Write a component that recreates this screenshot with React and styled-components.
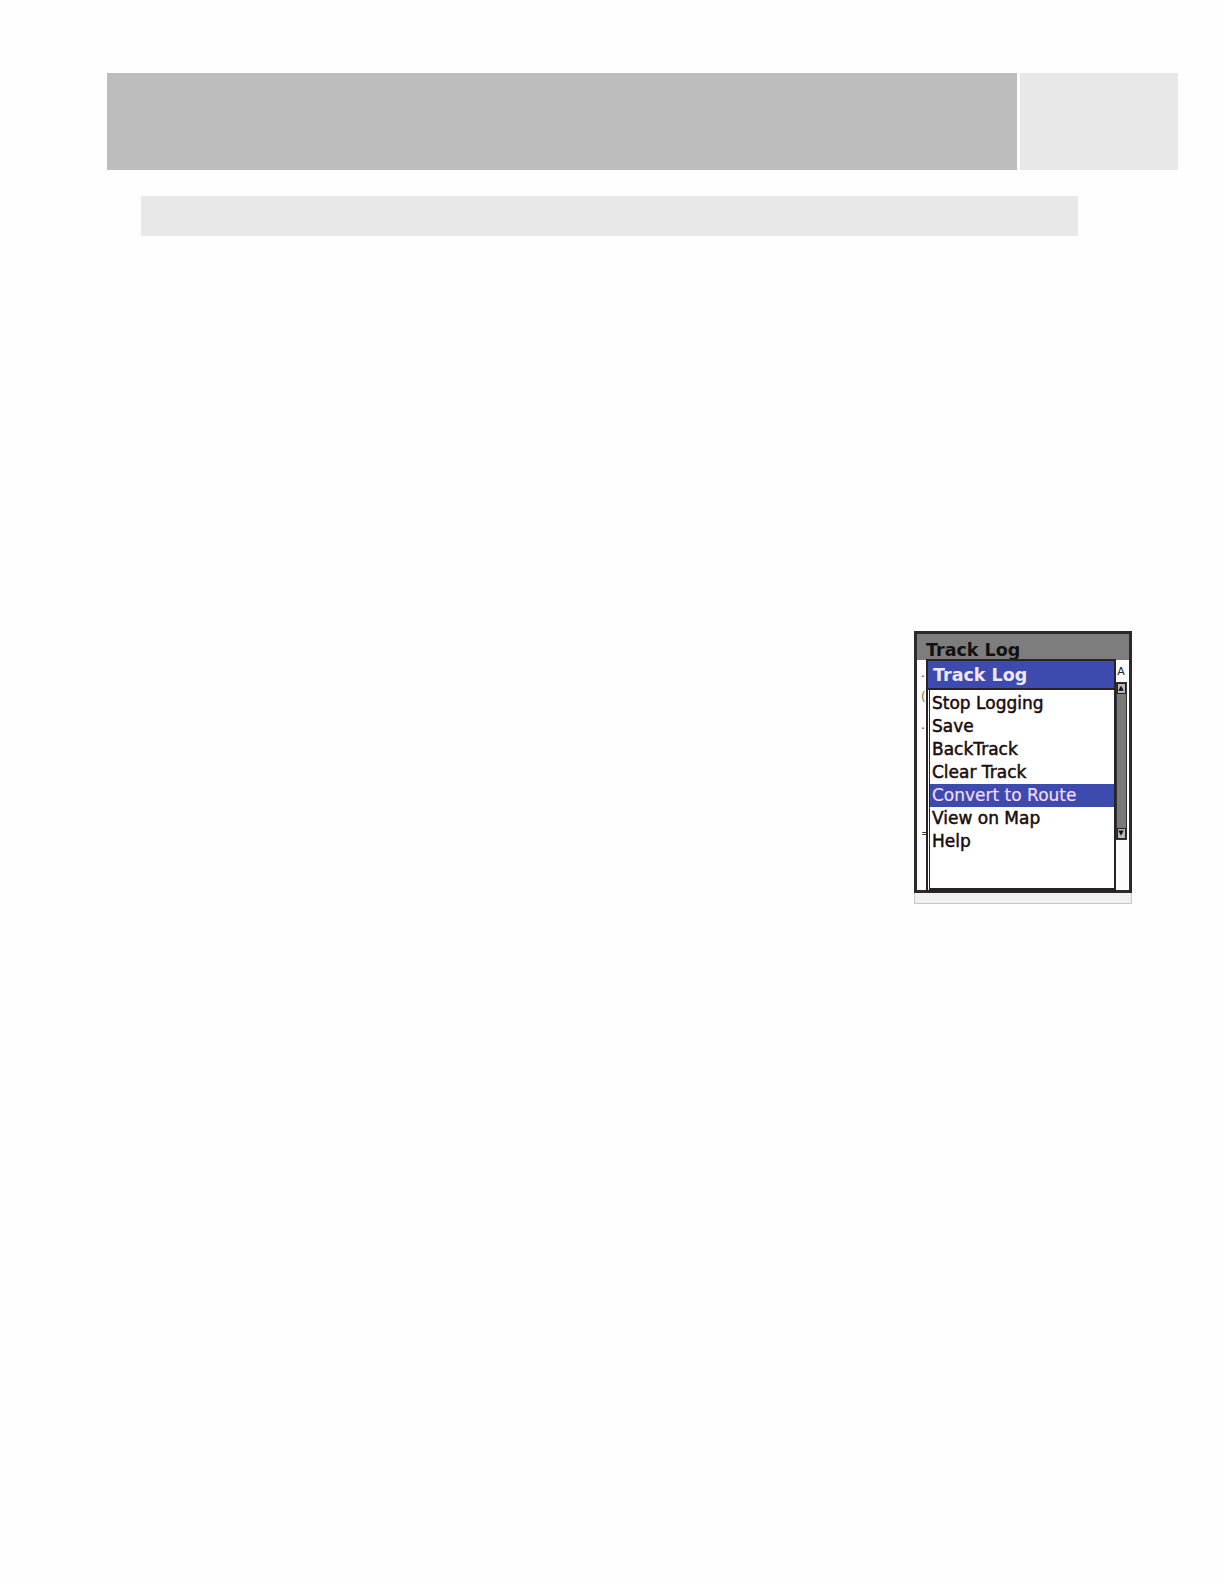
import styled, { createGlobalStyle } from "styled-components";

const GlobalStyle = createGlobalStyle`
  html, body {
    margin: 0;
    padding: 0;
    background: #fefefe;
    font-family: "DejaVu Sans", "Liberation Sans", sans-serif;
  }
`;

const Page = styled.div`
  height: 100vh;
  padding-top: 73px;
  box-sizing: border-box;
  background: #fefefe;
  overflow: hidden;
`;

const HeaderRow = styled.div`
  display: flex;
  gap: 3px;
  margin-left: 107px;
  height: 97px;
`;

const HeaderBlock = styled.div`
  width: ${p => p.w}px;
  background: ${p => p.bg};
`;

const SubBar = styled.div`
  margin: 26px 0 0 141px;
  width: 937px;
  height: 40px;
  background: #e8e8e8;
`;

const Device = styled.div`
  position: relative;
  margin: 395px 0 0 914px;
  width: 218px;
  height: 273px;
  display: flex;
  flex-direction: column;
`;

const Screen = styled.div`
  flex: 1;
  display: flex;
  flex-direction: column;
  border: 3px solid #2b2b2b;
  background: #fdfbfb;
`;

const TitleBar = styled.div`
  height: 26px;
  background: #7d7d7d;
  color: #111;
  font-weight: bold;
  font-size: 17.5px;
  padding-left: 9px;
  line-height: 33px;
  overflow: hidden;
`;

const ScreenBody = styled.div`
  flex: 1;
  display: flex;
  justify-content: space-between;
  padding: 6px 2px 0 4px;
`;

const Fragments = styled.div`
  display: flex;
  flex-direction: column;
  font-size: 12px;
  line-height: 14px;
  color: #333;
`;

const Fragment = styled.span`
  margin-top: ${p => p.gap}px;
  color: ${p => p.color || "#333"};
`;

const ScrollCol = styled.div`
  display: flex;
  flex-direction: column;
  align-items: center;
  gap: 2px;
  width: 12px;
`;

const Corner = styled.div`
  font-size: 11px;
  line-height: 12px;
  color: #222;
  height: 14px;
`;

const ScrollTrack = styled.div`
  width: 9px;
  height: 156px;
  background: #7a7a7a;
  border: 1px solid #333;
  display: flex;
  flex-direction: column;
  justify-content: space-between;
`;

const ScrollArrow = styled.div`
  height: 9px;
  background: #bbb;
  border: 1px solid #222;
  font-size: 7px;
  line-height: 9px;
  text-align: center;
  color: #111;
`;

const BottomStrip = styled.div`
  height: 10px;
  background: #f0f0f0;
  border: 1px solid #c8c8c8;
  border-top: none;
`;

const Popup = styled.div`
  position: absolute;
  left: 12px;
  top: 28px;
  width: 190px;
  height: 233px;
  box-sizing: border-box;
  border: 2px solid #2a2222;
  background: #fff;
  display: flex;
  flex-direction: column;
`;

const PopupHeader = styled.div`
  height: 27px;
  background: #3d4aae;
  color: #efe6ff;
  font-weight: bold;
  font-size: 17.5px;
  line-height: 28px;
  padding-left: 5px;
  border-bottom: 2px solid #2a2222;
  white-space: nowrap;
`;

const MenuList = styled.div`
  flex: 1;
  margin: 0 0 0 1px;
  border-left: 1px solid #2a2222;
  border-bottom: 2px solid #2a2222;
  padding-top: 2px;
  display: flex;
  flex-direction: column;
`;

const MenuItem = styled.div`
  height: 23px;
  line-height: 23px;
  font-size: 17px;
  padding-left: 2px;
  color: ${p => (p.active ? "#f2dcff" : "#1a0c0c")};
  background: ${p => (p.active ? "#3d4aae" : "transparent")};
  -webkit-text-stroke: ${p => (p.active ? "0.2px" : "0.5px")} currentColor;
  white-space: nowrap;
`;

const items = [
  "Stop Logging",
  "Save",
  "BackTrack",
  "Clear Track",
  "Convert to Route",
  "View on Map",
  "Help",
];

export default function App() {
  return (
    <Page>
      <GlobalStyle />
      <HeaderRow>
        <HeaderBlock w={910} bg="#bdbdbd" />
        <HeaderBlock w={158} bg="#e8e8e8" />
      </HeaderRow>
      <SubBar />
      <Device>
        <Screen>
          <TitleBar>Track Log</TitleBar>
          <ScreenBody>
            <Fragments>
              <Fragment gap={0}>.</Fragment>
              <Fragment gap={10} color="#8a7424">(</Fragment>
              <Fragment gap={14}>.</Fragment>
              <Fragment gap={94}>=</Fragment>
            </Fragments>
            <ScrollCol>
              <Corner>A</Corner>
              <ScrollTrack>
                <ScrollArrow>▲</ScrollArrow>
                <ScrollArrow>▼</ScrollArrow>
              </ScrollTrack>
            </ScrollCol>
          </ScreenBody>
        </Screen>
        <BottomStrip />
        <Popup>
          <PopupHeader>Track Log</PopupHeader>
          <MenuList>
            {items.map(item => (
              <MenuItem key={item} active={item === "Convert to Route"}>
                {item}
              </MenuItem>
            ))}
          </MenuList>
        </Popup>
      </Device>
    </Page>
  );
}
